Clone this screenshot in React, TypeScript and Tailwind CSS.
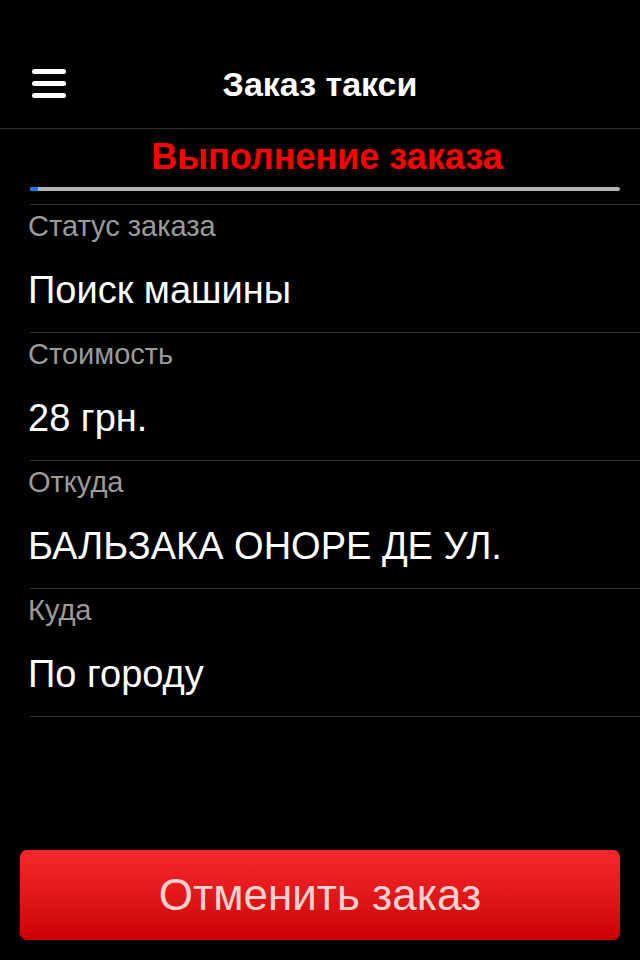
const rows = [
  { label: "Статус заказа", value: "Поиск машины" },
  { label: "Стоимость", value: "28 грн." },
  { label: "Откуда", value: "БАЛЬЗАКА ОНОРЕ ДЕ УЛ." },
  { label: "Куда", value: "По городу" },
];

export default function App() {
  return (
    <div className="h-[960px] w-[640px] bg-black flex flex-col font-['Liberation_Sans',Arial,sans-serif] text-white">
      {/* Header */}
      <div className="h-[129px] pt-[40px] border-b border-[#2e2e2e] flex items-center relative shrink-0">
        <div className="absolute left-[32px] top-[69px] flex flex-col gap-[7px]">
          <span className="block w-[34px] h-[5px] rounded-full bg-white" />
          <span className="block w-[34px] h-[5px] rounded-full bg-white" />
          <span className="block w-[34px] h-[5px] rounded-full bg-white" />
        </div>
        <h1 className="w-full text-center text-[34px] font-bold leading-[40px]">Заказ такси</h1>
      </div>

      {/* Progress */}
      <div className="h-[75px] pl-[30px] flex flex-col shrink-0">
        <p className="text-center text-[36px] font-bold text-[#ff0000] pr-[16px] pt-[8px] leading-[40px]">Выполнение заказа</p>
        <div className="mt-[10px] mr-[20px] h-[4px] rounded-full bg-[#b4b4b4] overflow-hidden">
          <div className="h-full w-[8px] bg-[#0a7cff]" />
        </div>
      </div>

      {/* Rows */}
      <div className="pl-[30px]">
        {rows.map((r) => (
          <div key={r.label} className="h-[128px] border-t border-[#333333] flex flex-col">
            <div className="h-[44px] -ml-[2px] flex items-center text-[29px] text-[#9a9a9a]">{r.label}</div>
            <div className="h-[83px] -ml-[2px] flex items-center text-[38px]">{r.value}</div>
          </div>
        ))}
        <div className="border-t border-[#333333]" />
      </div>

      {/* Cancel */}
      <div className="mt-auto px-[20px] pb-[20px]">
        <button className="w-full h-[90px] rounded-[7px] bg-gradient-to-b from-[#f7272b] to-[#cc0000] text-[44px] text-[#ffd2d2] flex items-center justify-center">
          Отменить заказ
        </button>
      </div>
    </div>
  );
}
